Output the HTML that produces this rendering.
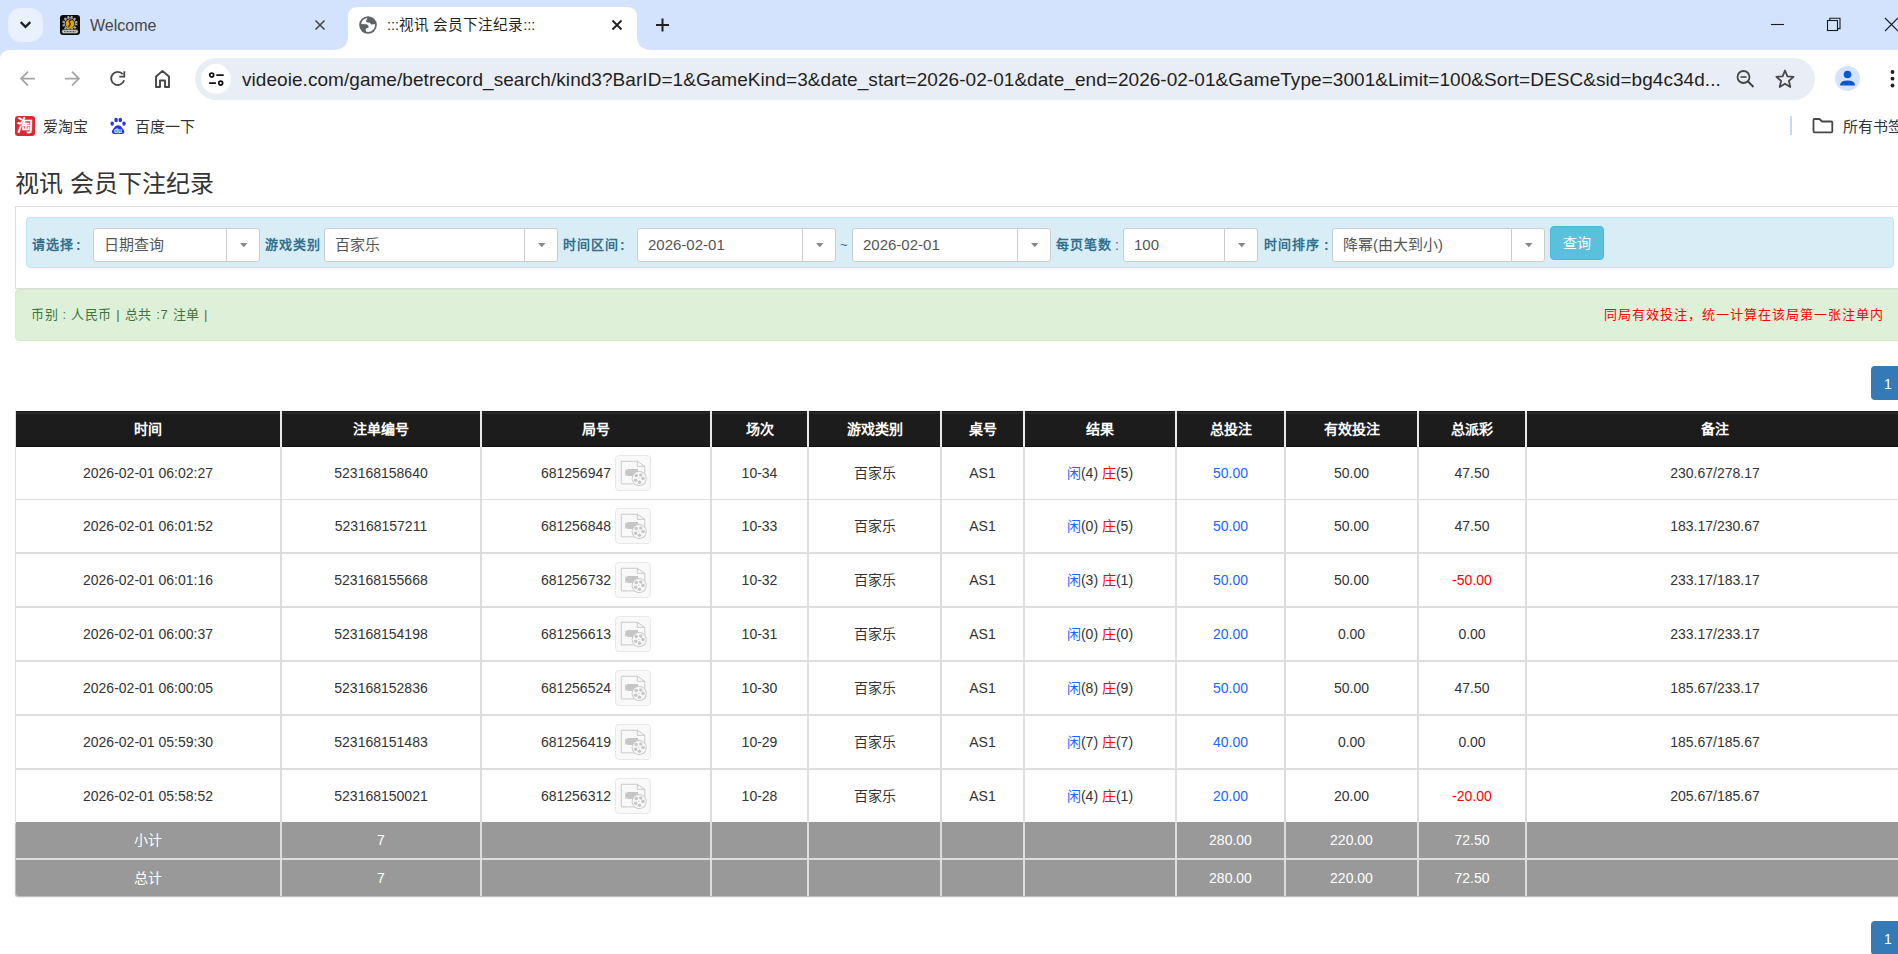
<!DOCTYPE html><html lang="zh-CN"><head><meta charset="utf-8"><title>视讯 会员下注纪录</title><style>

*{box-sizing:border-box}
html,body{margin:0;padding:0}
body{width:1898px;height:954px;overflow:hidden;position:relative;background:#fff;font-family:"Liberation Sans",sans-serif;color:#333}
.abs{position:absolute}
.t{position:absolute;white-space:nowrap;line-height:1}
svg{position:absolute;overflow:visible}
.ic{display:inline-block;vertical-align:middle;width:35px;height:35px;margin-left:4px;border:1px solid #eee;border-radius:4px;background:#f8f8f8;position:relative;top:-1px}

</style></head><body>
<div class="abs" style="left:0;top:0;width:1898px;height:62px;background:#d3e3fd"></div>
<div class="abs" style="left:8px;top:8px;width:35px;height:34px;border-radius:13px;background:#eaf1fe"></div>
<svg style="left:0;top:0" width="50" height="50"><path d="M20.7 22.1 L25.5 26.9 L30.3 22.1" fill="none" stroke="#1f1f1f" stroke-width="2.2"/></svg>
<div class="abs" style="left:60px;top:15px;width:20px;height:20px;border-radius:3px;background:#0a0a0a"></div>
<svg style="left:60px;top:15px" width="20" height="20"><circle cx="9.9" cy="8.4" r="6.3" fill="none" stroke="#a8a8a8" stroke-width="2.6" stroke-dasharray="1.9 1.4"/><circle cx="9.9" cy="8.4" r="5.6" fill="none" stroke="#9a9a9a" stroke-width="1"/><circle cx="9.9" cy="8.6" r="4.3" fill="#e0a41a"/><path d="M11.5 5.2 Q8.4 5.4 9.6 7.6 Q11.2 9.6 8.4 11.6" fill="none" stroke="#1a1a1a" stroke-width="1.3"/><circle cx="7.9" cy="13.3" r="1" fill="#e0a41a"/><circle cx="12" cy="13.3" r="1" fill="#e0a41a"/><rect x="1.8" y="14.6" width="16.4" height="3.9" rx="1.8" fill="#c8c8c8" stroke="#333" stroke-width="0.6"/><path d="M4 16.6 L16 16.6" stroke="#555" stroke-width="1.2" stroke-dasharray="1 0.5"/></svg>
<div class="t" style="left:90px;top:18px;font-size:16px;color:#474747">Welcome</div>
<svg style="left:0;top:0" width="340" height="50"><path d="M315.5 20.5 L324.5 29.5 M324.5 20.5 L315.5 29.5" stroke="#474747" stroke-width="1.6"/></svg>
<svg style="left:332px;top:0" width="322" height="50"><path d="M0 50 Q16 50 16 36 L16 17 Q16 7 26 7 L295 7 Q305 7 305 17 L305 36 Q305 50 321 50 Z" fill="#fff"/></svg>
<svg style="left:359px;top:16px" width="18" height="18"><defs><clipPath id="gc"><circle cx="9" cy="9" r="7.8"/></clipPath></defs><circle cx="9" cy="9" r="8.8" fill="#5f6368"/><circle cx="9" cy="9" r="7.1" fill="#fff"/><g clip-path="url(#gc)" fill="#5f6368"><path d="M9.6 0 L7.6 3.6 Q6.9 5.2 7.4 6 Q8.6 6.6 10.9 6.8 Q11.4 8.2 12.2 8.4 Q14.5 8.6 18 7.6 L18 0 Z"/><path d="M0 8 L7.6 8.2 Q9.6 9 9.7 10.8 Q9.5 11.9 7.6 12.3 Q6.6 12.6 6.7 14 L7.8 18 L0 18 Z"/></g></svg>
<div class="t" style="left:387px;top:18px;font-size:14.6px;color:#1f1f1f">:::视讯 会员下注纪录:::</div>
<svg style="left:0;top:0" width="700" height="50"><path d="M612.5 20.5 L621.5 29.5 M621.5 20.5 L612.5 29.5" stroke="#1f1f1f" stroke-width="1.8"/><path d="M656 25 L669 25 M662.5 18.5 L662.5 31.5" stroke="#1f1f1f" stroke-width="2"/></svg>
<svg style="left:1700px;top:0" width="198" height="50"><path d="M71 24.5 L84 24.5" stroke="#1a1a1a" stroke-width="1.1"/><rect x="127.5" y="20.5" width="10" height="10" fill="none" stroke="#1a1a1a" stroke-width="1.1"/><path d="M129.8 20.5 L129.8 18.3 L140 18.3 L140 28.6 L137.5 28.6" fill="none" stroke="#1a1a1a" stroke-width="1.1"/><path d="M185 18 L198 31 M198 18 L185 31" stroke="#1a1a1a" stroke-width="1.1"/></svg>
<div class="abs" style="left:0;top:50px;width:1898px;height:58px;background:#fff;border-top-left-radius:9px"></div>
<svg style="left:0;top:50px" width="195" height="58"><path d="M35 28.6 L21.2 28.6 M28 21.6 L21.1 28.6 L28 35.6" fill="none" stroke="#a6a6a6" stroke-width="1.8"/><path d="M65 28.6 L78.8 28.6 M72 21.6 L78.9 28.6 L72 35.6" fill="none" stroke="#a6a6a6" stroke-width="1.8"/><path d="M124.1 30.3 A6.6 6.6 0 1 1 122.8 24.2" fill="none" stroke="#474747" stroke-width="1.8"/><path d="M119.3 26.7 L124.3 26.7 L124.3 21.2" fill="none" stroke="#474747" stroke-width="1.8"/><path d="M156 37 L156 26.5 L162.5 21 L169 26.5 L169 37 L165 37 L165 30.5 L160 30.5 L160 37 Z" fill="none" stroke="#474747" stroke-width="1.9" stroke-linejoin="round"/></svg>
<div class="abs" style="left:195px;top:58px;width:1620px;height:42px;border-radius:21px;background:#e9eef6"></div>
<div class="abs" style="left:201px;top:64px;width:30px;height:30px;border-radius:15px;background:#fff"></div>
<svg style="left:201px;top:64px" width="30" height="30"><circle cx="10.7" cy="11.1" r="1.95" fill="none" stroke="#111" stroke-width="1.7"/><path d="M15.3 11.1 L22.7 11.1 M8.1 19.1 L14.9 19.1" stroke="#111" stroke-width="1.7"/><circle cx="19.7" cy="19.1" r="1.95" fill="none" stroke="#111" stroke-width="1.7"/></svg>
<div class="t" style="left:242px;top:70px;font-size:19px;letter-spacing:0.05px;color:#1f1f1f">videoie.com/game/betrecord_search/kind3?BarID=1&amp;GameKind=3&amp;date_start=2026-02-01&amp;date_end=2026-02-01&amp;GameType=3001&amp;Limit=100&amp;Sort=DESC&amp;sid=bg4c34d...</div>
<svg style="left:1700px;top:50px" width="198" height="58"><circle cx="43.5" cy="27" r="6" fill="none" stroke="#474747" stroke-width="1.8"/><path d="M40.5 27 L46.5 27" stroke="#474747" stroke-width="1.6"/><path d="M47.8 31.3 L53.5 37" stroke="#474747" stroke-width="2"/><path d="M85 20.5 L87.4 26.3 L93.6 26.8 L88.9 30.9 L90.3 37 L85 33.7 L79.7 37 L81.1 30.9 L76.4 26.8 L82.6 26.3 Z" fill="none" stroke="#474747" stroke-width="1.8" stroke-linejoin="round"/><circle cx="147.5" cy="28.5" r="12.5" fill="#d3e3fd"/><circle cx="147.5" cy="24.5" r="3.8" fill="#0b57d0"/><path d="M140 35.5 Q140 30.5 147.5 30.5 Q155 30.5 155 35.5 Z" fill="#0b57d0"/><circle cx="192.5" cy="22" r="1.9" fill="#1f1f1f"/><circle cx="192.5" cy="28.7" r="1.9" fill="#1f1f1f"/><circle cx="192.5" cy="35.5" r="1.9" fill="#1f1f1f"/></svg>
<div class="abs" style="left:15px;top:116px;width:20px;height:20px;border-radius:3px;background:#e0262f"></div>
<div class="t" style="left:17px;top:118px;font-size:16px;color:#fff;font-weight:bold">淘</div>
<div class="t" style="left:43px;top:119px;font-size:15px;color:#333">爱淘宝</div>
<svg style="left:108px;top:116px" width="20" height="20"><ellipse cx="4.2" cy="7.6" rx="1.7" ry="2.2" fill="#2932e1"/><ellipse cx="8.1" cy="4" rx="1.8" ry="2.3" fill="#2932e1"/><ellipse cx="12.3" cy="4" rx="1.8" ry="2.3" fill="#2932e1"/><ellipse cx="16" cy="7.6" rx="1.7" ry="2.2" fill="#2932e1"/><path d="M10.1 9.2 Q12.8 9.2 14.6 12.6 Q17.5 16 15.6 17.6 Q14.6 18.3 12 17.9 Q10.1 17.6 8.2 17.9 Q5.6 18.3 4.6 17.6 Q2.7 16 5.6 12.6 Q7.4 9.2 10.1 9.2 Z" fill="#2932e1"/><text x="10.1" y="16.8" font-size="6.5" fill="#fff" text-anchor="middle" font-family="Liberation Sans" font-weight="bold">du</text></svg>
<div class="t" style="left:135px;top:119px;font-size:15px;color:#333">百度一下</div>
<div class="abs" style="left:1790px;top:116px;width:2px;height:19px;background:#c6d9f7"></div>
<svg style="left:1810px;top:115px" width="26" height="22"><path d="M4.5 4 L9.5 4 L12 6.5 L21.3 6.5 Q22.3 6.5 22.3 7.5 L22.3 16.5 Q22.3 17.3 21.3 17.3 L4.5 17.3 Q3.5 17.3 3.5 16.3 L3.5 5 Q3.5 4 4.5 4 Z" fill="none" stroke="#474747" stroke-width="1.8" stroke-linejoin="round"/></svg>
<div class="t" style="left:1843px;top:119px;font-size:15px;color:#333">所有书签</div>
<div class="t" style="left:15px;top:172px;font-size:24px;color:#333">视讯 会员下注纪录</div>
<div class="abs" style="left:15px;top:206px;width:1950px;height:83px;border:1px solid #ddd;border-right:none"></div>
<div class="abs" style="left:26px;top:217px;width:1868px;height:51px;border:1px solid #bce8f1;border-radius:4px;background:#d9edf7"></div>
<div class="t" style="left:32px;top:238px;font-size:13px;letter-spacing:1px;font-weight:bold;color:#31708f">请选择</div>
<div class="t" style="left:76px;top:238px;font-size:14px;font-weight:bold;color:#31708f">:</div>
<div class="t" style="left:265px;top:238px;font-size:13px;letter-spacing:1px;font-weight:bold;color:#31708f">游戏类别</div>
<div class="t" style="left:563px;top:238px;font-size:13px;letter-spacing:1px;font-weight:bold;color:#31708f">时间区间</div>
<div class="t" style="left:620px;top:238px;font-size:14px;font-weight:bold;color:#31708f">:</div>
<div class="t" style="left:1056px;top:238px;font-size:13px;letter-spacing:1px;font-weight:bold;color:#31708f">每页笔数</div>
<div class="t" style="left:1115px;top:238px;font-size:14px;font-weight:normal;color:#31708f">:</div>
<div class="t" style="left:1264px;top:238px;font-size:13px;letter-spacing:1px;font-weight:bold;color:#31708f">时间排序</div>
<div class="t" style="left:1324px;top:238px;font-size:14px;font-weight:bold;color:#31708f">:</div>
<div class="t" style="left:840px;top:238px;font-size:13px;color:#31708f">~</div>
<div class="abs" style="left:93px;top:228px;width:167px;height:34px;border:1px solid #ccc;border-radius:3px;background:#fff"></div>
<div class="abs" style="left:226px;top:229px;width:1px;height:32px;background:#ccc"></div>
<svg style="left:240px;top:243px" width="8" height="5"><path d="M0 0 L7.5 0 L3.75 4.2 Z" fill="#888"/></svg>
<div class="t" style="left:104px;top:237px;font-size:15px;color:#555">日期查询</div>
<div class="abs" style="left:324px;top:228px;width:234px;height:34px;border:1px solid #ccc;border-radius:3px;background:#fff"></div>
<div class="abs" style="left:524px;top:229px;width:1px;height:32px;background:#ccc"></div>
<svg style="left:538px;top:243px" width="8" height="5"><path d="M0 0 L7.5 0 L3.75 4.2 Z" fill="#888"/></svg>
<div class="t" style="left:335px;top:237px;font-size:15px;color:#555">百家乐</div>
<div class="abs" style="left:637px;top:228px;width:199px;height:34px;border:1px solid #ccc;border-radius:3px;background:#fff"></div>
<div class="abs" style="left:802px;top:229px;width:1px;height:32px;background:#ccc"></div>
<svg style="left:816px;top:243px" width="8" height="5"><path d="M0 0 L7.5 0 L3.75 4.2 Z" fill="#888"/></svg>
<div class="t" style="left:648px;top:237px;font-size:15px;color:#555">2026-02-01</div>
<div class="abs" style="left:852px;top:228px;width:199px;height:34px;border:1px solid #ccc;border-radius:3px;background:#fff"></div>
<div class="abs" style="left:1017px;top:229px;width:1px;height:32px;background:#ccc"></div>
<svg style="left:1031px;top:243px" width="8" height="5"><path d="M0 0 L7.5 0 L3.75 4.2 Z" fill="#888"/></svg>
<div class="t" style="left:863px;top:237px;font-size:15px;color:#555">2026-02-01</div>
<div class="abs" style="left:1123px;top:228px;width:135px;height:34px;border:1px solid #ccc;border-radius:3px;background:#fff"></div>
<div class="abs" style="left:1224px;top:229px;width:1px;height:32px;background:#ccc"></div>
<svg style="left:1238px;top:243px" width="8" height="5"><path d="M0 0 L7.5 0 L3.75 4.2 Z" fill="#888"/></svg>
<div class="t" style="left:1134px;top:237px;font-size:15px;color:#555">100</div>
<div class="abs" style="left:1332px;top:228px;width:213px;height:34px;border:1px solid #ccc;border-radius:3px;background:#fff"></div>
<div class="abs" style="left:1511px;top:229px;width:1px;height:32px;background:#ccc"></div>
<svg style="left:1525px;top:243px" width="8" height="5"><path d="M0 0 L7.5 0 L3.75 4.2 Z" fill="#888"/></svg>
<div class="t" style="left:1343px;top:237px;font-size:15px;color:#555">降幂(由大到小)</div>
<div class="abs" style="left:1550px;top:226px;width:54px;height:34px;border:1px solid #46b8da;border-radius:4px;background:#5bc0de"></div>
<div class="t" style="left:1563px;top:236px;font-size:14px;color:#fff">查询</div>
<div class="abs" style="left:15px;top:289px;width:1950px;height:52px;border:1px solid #d6e9c6;border-radius:4px;background:#dff0d8"></div>
<div class="t" style="left:31px;top:308px;font-size:13px;letter-spacing:0.65px;color:#3c763d">币别 : 人民币 | 总共 :7 注单 |</div>
<div class="t" style="left:1604px;top:308px;font-size:13px;letter-spacing:1px;color:#f00">同局有效投注，统一计算在该局第一张注单内</div>
<div class="abs" style="left:1871px;top:366px;width:40px;height:34px;border-radius:4px;background:#337ab7"></div>
<div class="t" style="left:1884px;top:377px;font-size:14px;color:#fff">1</div>
<div class="abs" style="left:1871px;top:921px;width:40px;height:34px;border-radius:4px;background:#337ab7"></div>
<div class="t" style="left:1884px;top:932px;font-size:14px;color:#fff">1</div>
<div class="abs" style="left:15px;top:411px;width:1px;height:411px;background:#ddd"></div>
<div class="abs" style="left:16px;top:411px;width:1950px;height:36px;background:#1c1c1c;border-top:1px solid #171717;border-bottom:1px solid #0f0f0f"></div>
<div class="abs" style="left:16px;top:412px;width:1950px;height:2px;background:#282828"></div>
<div class="abs" style="left:16px;top:499px;width:1950px;height:1px;background:#ddd"></div>
<div class="abs" style="left:16px;top:552px;width:1950px;height:2px;background:#ddd"></div>
<div class="abs" style="left:16px;top:606px;width:1950px;height:2px;background:#ddd"></div>
<div class="abs" style="left:16px;top:660px;width:1950px;height:2px;background:#ddd"></div>
<div class="abs" style="left:16px;top:714px;width:1950px;height:2px;background:#ddd"></div>
<div class="abs" style="left:16px;top:768px;width:1950px;height:2px;background:#ddd"></div>
<div class="abs" style="left:16px;top:822px;width:1950px;height:0px;background:#ddd"></div>
<div class="abs" style="left:16px;top:822px;width:1950px;height:74px;background:#999;border-bottom-left-radius:3px;box-shadow:-0.5px 1px 1.5px rgba(0,0,0,.3)"></div>
<div class="abs" style="left:16px;top:858px;width:1950px;height:2px;background:#ddd"></div>
<div class="abs" style="left:280px;top:411px;width:2px;height:36px;background:#e8e8e8"></div>
<div class="abs" style="left:280px;top:447px;width:2px;height:449px;background:#ddd"></div>
<div class="abs" style="left:480px;top:411px;width:2px;height:36px;background:#e8e8e8"></div>
<div class="abs" style="left:480px;top:447px;width:2px;height:449px;background:#ddd"></div>
<div class="abs" style="left:710px;top:411px;width:2px;height:36px;background:#e8e8e8"></div>
<div class="abs" style="left:710px;top:447px;width:2px;height:449px;background:#ddd"></div>
<div class="abs" style="left:807px;top:411px;width:2px;height:36px;background:#e8e8e8"></div>
<div class="abs" style="left:807px;top:447px;width:2px;height:449px;background:#ddd"></div>
<div class="abs" style="left:940px;top:411px;width:2px;height:36px;background:#e8e8e8"></div>
<div class="abs" style="left:940px;top:447px;width:2px;height:449px;background:#ddd"></div>
<div class="abs" style="left:1023px;top:411px;width:2px;height:36px;background:#e8e8e8"></div>
<div class="abs" style="left:1023px;top:447px;width:2px;height:449px;background:#ddd"></div>
<div class="abs" style="left:1175px;top:411px;width:2px;height:36px;background:#e8e8e8"></div>
<div class="abs" style="left:1175px;top:447px;width:2px;height:449px;background:#ddd"></div>
<div class="abs" style="left:1284px;top:411px;width:2px;height:36px;background:#e8e8e8"></div>
<div class="abs" style="left:1284px;top:447px;width:2px;height:449px;background:#ddd"></div>
<div class="abs" style="left:1417px;top:411px;width:2px;height:36px;background:#e8e8e8"></div>
<div class="abs" style="left:1417px;top:447px;width:2px;height:449px;background:#ddd"></div>
<div class="abs" style="left:1525px;top:411px;width:2px;height:36px;background:#e8e8e8"></div>
<div class="abs" style="left:1525px;top:447px;width:2px;height:449px;background:#ddd"></div>
<div class="abs" style="left:16px;top:419px;width:264px;height:20px;line-height:20px;text-align:center;white-space:nowrap;font-size:14px;font-weight:bold;color:#fff">时间</div>
<div class="abs" style="left:282px;top:419px;width:198px;height:20px;line-height:20px;text-align:center;white-space:nowrap;font-size:14px;font-weight:bold;color:#fff">注单编号</div>
<div class="abs" style="left:482px;top:419px;width:228px;height:20px;line-height:20px;text-align:center;white-space:nowrap;font-size:14px;font-weight:bold;color:#fff">局号</div>
<div class="abs" style="left:712px;top:419px;width:95px;height:20px;line-height:20px;text-align:center;white-space:nowrap;font-size:14px;font-weight:bold;color:#fff">场次</div>
<div class="abs" style="left:809px;top:419px;width:131px;height:20px;line-height:20px;text-align:center;white-space:nowrap;font-size:14px;font-weight:bold;color:#fff">游戏类别</div>
<div class="abs" style="left:942px;top:419px;width:81px;height:20px;line-height:20px;text-align:center;white-space:nowrap;font-size:14px;font-weight:bold;color:#fff">桌号</div>
<div class="abs" style="left:1025px;top:419px;width:150px;height:20px;line-height:20px;text-align:center;white-space:nowrap;font-size:14px;font-weight:bold;color:#fff">结果</div>
<div class="abs" style="left:1177px;top:419px;width:107px;height:20px;line-height:20px;text-align:center;white-space:nowrap;font-size:14px;font-weight:bold;color:#fff">总投注</div>
<div class="abs" style="left:1286px;top:419px;width:131px;height:20px;line-height:20px;text-align:center;white-space:nowrap;font-size:14px;font-weight:bold;color:#fff">有效投注</div>
<div class="abs" style="left:1419px;top:419px;width:106px;height:20px;line-height:20px;text-align:center;white-space:nowrap;font-size:14px;font-weight:bold;color:#fff">总派彩</div>
<div class="abs" style="left:1527px;top:419px;width:376px;height:20px;line-height:20px;text-align:center;white-space:nowrap;font-size:14px;font-weight:bold;color:#fff">备注</div>
<div class="abs" style="left:16px;top:463px;width:264px;height:20px;line-height:20px;text-align:center;white-space:nowrap;font-size:14px;color:#333">2026-02-01 06:02:27</div>
<div class="abs" style="left:282px;top:463px;width:198px;height:20px;line-height:20px;text-align:center;white-space:nowrap;font-size:14px;color:#333">523168158640</div>
<div class="abs" style="left:482px;top:463px;width:129px;height:20px;line-height:20px;text-align:right;white-space:nowrap;font-size:14px;color:#333">681256947</div>
<div class="abs" style="left:615px;top:455px;width:36px;height:36px;border:1px solid #e9e9e9;border-radius:4px;background:#f9f9f9"></div>
<svg style="left:612px;top:452px" width="42" height="42"><path d="M9.25 9.25 L25.3 9.25 L32.8 14.3 L32.8 31.9 L9.25 31.9 Z" fill="none" stroke="#c9c9c9" stroke-width="1"/><path d="M25.3 9.25 L25.3 14.3 L32.8 14.3" fill="none" stroke="#c9c9c9" stroke-width="1"/><path d="M13.2 17.2 L15.2 18.4 L15.2 17 L26 17 L26 24 L15.2 24 L15.2 22.6 L13.2 24 Z" fill="#c6c6c6"/><circle cx="27.2" cy="26.5" r="7.1" fill="#f9f9f9" stroke="#c9c9c9" stroke-width="1"/><circle cx="24.2" cy="23.6" r="1.75" fill="#c6c6c6"/><circle cx="28.8" cy="22.9" r="1.75" fill="#c6c6c6"/><circle cx="31" cy="26.6" r="1.75" fill="#c6c6c6"/><circle cx="27.5" cy="30.2" r="1.75" fill="#c6c6c6"/><circle cx="23.6" cy="28.2" r="1.75" fill="#c6c6c6"/><circle cx="26.9" cy="26.4" r="0.6" fill="#c6c6c6"/></svg>
<div class="abs" style="left:712px;top:463px;width:95px;height:20px;line-height:20px;text-align:center;white-space:nowrap;font-size:14px;color:#333">10-34</div>
<div class="abs" style="left:809px;top:463px;width:131px;height:20px;line-height:20px;text-align:center;white-space:nowrap;font-size:14px;color:#333">百家乐</div>
<div class="abs" style="left:942px;top:463px;width:81px;height:20px;line-height:20px;text-align:center;white-space:nowrap;font-size:14px;color:#333">AS1</div>
<div class="abs" style="left:1025px;top:463px;width:150px;height:20px;line-height:20px;text-align:center;white-space:nowrap;font-size:14px;color:#333"><span style="color:#1a66ff">闲</span>(4) <span style="color:#f00">庄</span>(5)</div>
<div class="abs" style="left:1177px;top:463px;width:107px;height:20px;line-height:20px;text-align:center;white-space:nowrap;font-size:14px;color:#1a66ff">50.00</div>
<div class="abs" style="left:1286px;top:463px;width:131px;height:20px;line-height:20px;text-align:center;white-space:nowrap;font-size:14px;color:#333">50.00</div>
<div class="abs" style="left:1419px;top:463px;width:106px;height:20px;line-height:20px;text-align:center;white-space:nowrap;font-size:14px;color:#333">47.50</div>
<div class="abs" style="left:1527px;top:463px;width:376px;height:20px;line-height:20px;text-align:center;white-space:nowrap;font-size:14px;color:#333">230.67/278.17</div>
<div class="abs" style="left:16px;top:516px;width:264px;height:20px;line-height:20px;text-align:center;white-space:nowrap;font-size:14px;color:#333">2026-02-01 06:01:52</div>
<div class="abs" style="left:282px;top:516px;width:198px;height:20px;line-height:20px;text-align:center;white-space:nowrap;font-size:14px;color:#333">523168157211</div>
<div class="abs" style="left:482px;top:516px;width:129px;height:20px;line-height:20px;text-align:right;white-space:nowrap;font-size:14px;color:#333">681256848</div>
<div class="abs" style="left:615px;top:508px;width:36px;height:36px;border:1px solid #e9e9e9;border-radius:4px;background:#f9f9f9"></div>
<svg style="left:612px;top:505px" width="42" height="42"><path d="M9.25 9.25 L25.3 9.25 L32.8 14.3 L32.8 31.9 L9.25 31.9 Z" fill="none" stroke="#c9c9c9" stroke-width="1"/><path d="M25.3 9.25 L25.3 14.3 L32.8 14.3" fill="none" stroke="#c9c9c9" stroke-width="1"/><path d="M13.2 17.2 L15.2 18.4 L15.2 17 L26 17 L26 24 L15.2 24 L15.2 22.6 L13.2 24 Z" fill="#c6c6c6"/><circle cx="27.2" cy="26.5" r="7.1" fill="#f9f9f9" stroke="#c9c9c9" stroke-width="1"/><circle cx="24.2" cy="23.6" r="1.75" fill="#c6c6c6"/><circle cx="28.8" cy="22.9" r="1.75" fill="#c6c6c6"/><circle cx="31" cy="26.6" r="1.75" fill="#c6c6c6"/><circle cx="27.5" cy="30.2" r="1.75" fill="#c6c6c6"/><circle cx="23.6" cy="28.2" r="1.75" fill="#c6c6c6"/><circle cx="26.9" cy="26.4" r="0.6" fill="#c6c6c6"/></svg>
<div class="abs" style="left:712px;top:516px;width:95px;height:20px;line-height:20px;text-align:center;white-space:nowrap;font-size:14px;color:#333">10-33</div>
<div class="abs" style="left:809px;top:516px;width:131px;height:20px;line-height:20px;text-align:center;white-space:nowrap;font-size:14px;color:#333">百家乐</div>
<div class="abs" style="left:942px;top:516px;width:81px;height:20px;line-height:20px;text-align:center;white-space:nowrap;font-size:14px;color:#333">AS1</div>
<div class="abs" style="left:1025px;top:516px;width:150px;height:20px;line-height:20px;text-align:center;white-space:nowrap;font-size:14px;color:#333"><span style="color:#1a66ff">闲</span>(0) <span style="color:#f00">庄</span>(5)</div>
<div class="abs" style="left:1177px;top:516px;width:107px;height:20px;line-height:20px;text-align:center;white-space:nowrap;font-size:14px;color:#1a66ff">50.00</div>
<div class="abs" style="left:1286px;top:516px;width:131px;height:20px;line-height:20px;text-align:center;white-space:nowrap;font-size:14px;color:#333">50.00</div>
<div class="abs" style="left:1419px;top:516px;width:106px;height:20px;line-height:20px;text-align:center;white-space:nowrap;font-size:14px;color:#333">47.50</div>
<div class="abs" style="left:1527px;top:516px;width:376px;height:20px;line-height:20px;text-align:center;white-space:nowrap;font-size:14px;color:#333">183.17/230.67</div>
<div class="abs" style="left:16px;top:570px;width:264px;height:20px;line-height:20px;text-align:center;white-space:nowrap;font-size:14px;color:#333">2026-02-01 06:01:16</div>
<div class="abs" style="left:282px;top:570px;width:198px;height:20px;line-height:20px;text-align:center;white-space:nowrap;font-size:14px;color:#333">523168155668</div>
<div class="abs" style="left:482px;top:570px;width:129px;height:20px;line-height:20px;text-align:right;white-space:nowrap;font-size:14px;color:#333">681256732</div>
<div class="abs" style="left:615px;top:562px;width:36px;height:36px;border:1px solid #e9e9e9;border-radius:4px;background:#f9f9f9"></div>
<svg style="left:612px;top:559px" width="42" height="42"><path d="M9.25 9.25 L25.3 9.25 L32.8 14.3 L32.8 31.9 L9.25 31.9 Z" fill="none" stroke="#c9c9c9" stroke-width="1"/><path d="M25.3 9.25 L25.3 14.3 L32.8 14.3" fill="none" stroke="#c9c9c9" stroke-width="1"/><path d="M13.2 17.2 L15.2 18.4 L15.2 17 L26 17 L26 24 L15.2 24 L15.2 22.6 L13.2 24 Z" fill="#c6c6c6"/><circle cx="27.2" cy="26.5" r="7.1" fill="#f9f9f9" stroke="#c9c9c9" stroke-width="1"/><circle cx="24.2" cy="23.6" r="1.75" fill="#c6c6c6"/><circle cx="28.8" cy="22.9" r="1.75" fill="#c6c6c6"/><circle cx="31" cy="26.6" r="1.75" fill="#c6c6c6"/><circle cx="27.5" cy="30.2" r="1.75" fill="#c6c6c6"/><circle cx="23.6" cy="28.2" r="1.75" fill="#c6c6c6"/><circle cx="26.9" cy="26.4" r="0.6" fill="#c6c6c6"/></svg>
<div class="abs" style="left:712px;top:570px;width:95px;height:20px;line-height:20px;text-align:center;white-space:nowrap;font-size:14px;color:#333">10-32</div>
<div class="abs" style="left:809px;top:570px;width:131px;height:20px;line-height:20px;text-align:center;white-space:nowrap;font-size:14px;color:#333">百家乐</div>
<div class="abs" style="left:942px;top:570px;width:81px;height:20px;line-height:20px;text-align:center;white-space:nowrap;font-size:14px;color:#333">AS1</div>
<div class="abs" style="left:1025px;top:570px;width:150px;height:20px;line-height:20px;text-align:center;white-space:nowrap;font-size:14px;color:#333"><span style="color:#1a66ff">闲</span>(3) <span style="color:#f00">庄</span>(1)</div>
<div class="abs" style="left:1177px;top:570px;width:107px;height:20px;line-height:20px;text-align:center;white-space:nowrap;font-size:14px;color:#1a66ff">50.00</div>
<div class="abs" style="left:1286px;top:570px;width:131px;height:20px;line-height:20px;text-align:center;white-space:nowrap;font-size:14px;color:#333">50.00</div>
<div class="abs" style="left:1419px;top:570px;width:106px;height:20px;line-height:20px;text-align:center;white-space:nowrap;font-size:14px;color:#f00">-50.00</div>
<div class="abs" style="left:1527px;top:570px;width:376px;height:20px;line-height:20px;text-align:center;white-space:nowrap;font-size:14px;color:#333">233.17/183.17</div>
<div class="abs" style="left:16px;top:624px;width:264px;height:20px;line-height:20px;text-align:center;white-space:nowrap;font-size:14px;color:#333">2026-02-01 06:00:37</div>
<div class="abs" style="left:282px;top:624px;width:198px;height:20px;line-height:20px;text-align:center;white-space:nowrap;font-size:14px;color:#333">523168154198</div>
<div class="abs" style="left:482px;top:624px;width:129px;height:20px;line-height:20px;text-align:right;white-space:nowrap;font-size:14px;color:#333">681256613</div>
<div class="abs" style="left:615px;top:616px;width:36px;height:36px;border:1px solid #e9e9e9;border-radius:4px;background:#f9f9f9"></div>
<svg style="left:612px;top:613px" width="42" height="42"><path d="M9.25 9.25 L25.3 9.25 L32.8 14.3 L32.8 31.9 L9.25 31.9 Z" fill="none" stroke="#c9c9c9" stroke-width="1"/><path d="M25.3 9.25 L25.3 14.3 L32.8 14.3" fill="none" stroke="#c9c9c9" stroke-width="1"/><path d="M13.2 17.2 L15.2 18.4 L15.2 17 L26 17 L26 24 L15.2 24 L15.2 22.6 L13.2 24 Z" fill="#c6c6c6"/><circle cx="27.2" cy="26.5" r="7.1" fill="#f9f9f9" stroke="#c9c9c9" stroke-width="1"/><circle cx="24.2" cy="23.6" r="1.75" fill="#c6c6c6"/><circle cx="28.8" cy="22.9" r="1.75" fill="#c6c6c6"/><circle cx="31" cy="26.6" r="1.75" fill="#c6c6c6"/><circle cx="27.5" cy="30.2" r="1.75" fill="#c6c6c6"/><circle cx="23.6" cy="28.2" r="1.75" fill="#c6c6c6"/><circle cx="26.9" cy="26.4" r="0.6" fill="#c6c6c6"/></svg>
<div class="abs" style="left:712px;top:624px;width:95px;height:20px;line-height:20px;text-align:center;white-space:nowrap;font-size:14px;color:#333">10-31</div>
<div class="abs" style="left:809px;top:624px;width:131px;height:20px;line-height:20px;text-align:center;white-space:nowrap;font-size:14px;color:#333">百家乐</div>
<div class="abs" style="left:942px;top:624px;width:81px;height:20px;line-height:20px;text-align:center;white-space:nowrap;font-size:14px;color:#333">AS1</div>
<div class="abs" style="left:1025px;top:624px;width:150px;height:20px;line-height:20px;text-align:center;white-space:nowrap;font-size:14px;color:#333"><span style="color:#1a66ff">闲</span>(0) <span style="color:#f00">庄</span>(0)</div>
<div class="abs" style="left:1177px;top:624px;width:107px;height:20px;line-height:20px;text-align:center;white-space:nowrap;font-size:14px;color:#1a66ff">20.00</div>
<div class="abs" style="left:1286px;top:624px;width:131px;height:20px;line-height:20px;text-align:center;white-space:nowrap;font-size:14px;color:#333">0.00</div>
<div class="abs" style="left:1419px;top:624px;width:106px;height:20px;line-height:20px;text-align:center;white-space:nowrap;font-size:14px;color:#333">0.00</div>
<div class="abs" style="left:1527px;top:624px;width:376px;height:20px;line-height:20px;text-align:center;white-space:nowrap;font-size:14px;color:#333">233.17/233.17</div>
<div class="abs" style="left:16px;top:678px;width:264px;height:20px;line-height:20px;text-align:center;white-space:nowrap;font-size:14px;color:#333">2026-02-01 06:00:05</div>
<div class="abs" style="left:282px;top:678px;width:198px;height:20px;line-height:20px;text-align:center;white-space:nowrap;font-size:14px;color:#333">523168152836</div>
<div class="abs" style="left:482px;top:678px;width:129px;height:20px;line-height:20px;text-align:right;white-space:nowrap;font-size:14px;color:#333">681256524</div>
<div class="abs" style="left:615px;top:670px;width:36px;height:36px;border:1px solid #e9e9e9;border-radius:4px;background:#f9f9f9"></div>
<svg style="left:612px;top:667px" width="42" height="42"><path d="M9.25 9.25 L25.3 9.25 L32.8 14.3 L32.8 31.9 L9.25 31.9 Z" fill="none" stroke="#c9c9c9" stroke-width="1"/><path d="M25.3 9.25 L25.3 14.3 L32.8 14.3" fill="none" stroke="#c9c9c9" stroke-width="1"/><path d="M13.2 17.2 L15.2 18.4 L15.2 17 L26 17 L26 24 L15.2 24 L15.2 22.6 L13.2 24 Z" fill="#c6c6c6"/><circle cx="27.2" cy="26.5" r="7.1" fill="#f9f9f9" stroke="#c9c9c9" stroke-width="1"/><circle cx="24.2" cy="23.6" r="1.75" fill="#c6c6c6"/><circle cx="28.8" cy="22.9" r="1.75" fill="#c6c6c6"/><circle cx="31" cy="26.6" r="1.75" fill="#c6c6c6"/><circle cx="27.5" cy="30.2" r="1.75" fill="#c6c6c6"/><circle cx="23.6" cy="28.2" r="1.75" fill="#c6c6c6"/><circle cx="26.9" cy="26.4" r="0.6" fill="#c6c6c6"/></svg>
<div class="abs" style="left:712px;top:678px;width:95px;height:20px;line-height:20px;text-align:center;white-space:nowrap;font-size:14px;color:#333">10-30</div>
<div class="abs" style="left:809px;top:678px;width:131px;height:20px;line-height:20px;text-align:center;white-space:nowrap;font-size:14px;color:#333">百家乐</div>
<div class="abs" style="left:942px;top:678px;width:81px;height:20px;line-height:20px;text-align:center;white-space:nowrap;font-size:14px;color:#333">AS1</div>
<div class="abs" style="left:1025px;top:678px;width:150px;height:20px;line-height:20px;text-align:center;white-space:nowrap;font-size:14px;color:#333"><span style="color:#1a66ff">闲</span>(8) <span style="color:#f00">庄</span>(9)</div>
<div class="abs" style="left:1177px;top:678px;width:107px;height:20px;line-height:20px;text-align:center;white-space:nowrap;font-size:14px;color:#1a66ff">50.00</div>
<div class="abs" style="left:1286px;top:678px;width:131px;height:20px;line-height:20px;text-align:center;white-space:nowrap;font-size:14px;color:#333">50.00</div>
<div class="abs" style="left:1419px;top:678px;width:106px;height:20px;line-height:20px;text-align:center;white-space:nowrap;font-size:14px;color:#333">47.50</div>
<div class="abs" style="left:1527px;top:678px;width:376px;height:20px;line-height:20px;text-align:center;white-space:nowrap;font-size:14px;color:#333">185.67/233.17</div>
<div class="abs" style="left:16px;top:732px;width:264px;height:20px;line-height:20px;text-align:center;white-space:nowrap;font-size:14px;color:#333">2026-02-01 05:59:30</div>
<div class="abs" style="left:282px;top:732px;width:198px;height:20px;line-height:20px;text-align:center;white-space:nowrap;font-size:14px;color:#333">523168151483</div>
<div class="abs" style="left:482px;top:732px;width:129px;height:20px;line-height:20px;text-align:right;white-space:nowrap;font-size:14px;color:#333">681256419</div>
<div class="abs" style="left:615px;top:724px;width:36px;height:36px;border:1px solid #e9e9e9;border-radius:4px;background:#f9f9f9"></div>
<svg style="left:612px;top:721px" width="42" height="42"><path d="M9.25 9.25 L25.3 9.25 L32.8 14.3 L32.8 31.9 L9.25 31.9 Z" fill="none" stroke="#c9c9c9" stroke-width="1"/><path d="M25.3 9.25 L25.3 14.3 L32.8 14.3" fill="none" stroke="#c9c9c9" stroke-width="1"/><path d="M13.2 17.2 L15.2 18.4 L15.2 17 L26 17 L26 24 L15.2 24 L15.2 22.6 L13.2 24 Z" fill="#c6c6c6"/><circle cx="27.2" cy="26.5" r="7.1" fill="#f9f9f9" stroke="#c9c9c9" stroke-width="1"/><circle cx="24.2" cy="23.6" r="1.75" fill="#c6c6c6"/><circle cx="28.8" cy="22.9" r="1.75" fill="#c6c6c6"/><circle cx="31" cy="26.6" r="1.75" fill="#c6c6c6"/><circle cx="27.5" cy="30.2" r="1.75" fill="#c6c6c6"/><circle cx="23.6" cy="28.2" r="1.75" fill="#c6c6c6"/><circle cx="26.9" cy="26.4" r="0.6" fill="#c6c6c6"/></svg>
<div class="abs" style="left:712px;top:732px;width:95px;height:20px;line-height:20px;text-align:center;white-space:nowrap;font-size:14px;color:#333">10-29</div>
<div class="abs" style="left:809px;top:732px;width:131px;height:20px;line-height:20px;text-align:center;white-space:nowrap;font-size:14px;color:#333">百家乐</div>
<div class="abs" style="left:942px;top:732px;width:81px;height:20px;line-height:20px;text-align:center;white-space:nowrap;font-size:14px;color:#333">AS1</div>
<div class="abs" style="left:1025px;top:732px;width:150px;height:20px;line-height:20px;text-align:center;white-space:nowrap;font-size:14px;color:#333"><span style="color:#1a66ff">闲</span>(7) <span style="color:#f00">庄</span>(7)</div>
<div class="abs" style="left:1177px;top:732px;width:107px;height:20px;line-height:20px;text-align:center;white-space:nowrap;font-size:14px;color:#1a66ff">40.00</div>
<div class="abs" style="left:1286px;top:732px;width:131px;height:20px;line-height:20px;text-align:center;white-space:nowrap;font-size:14px;color:#333">0.00</div>
<div class="abs" style="left:1419px;top:732px;width:106px;height:20px;line-height:20px;text-align:center;white-space:nowrap;font-size:14px;color:#333">0.00</div>
<div class="abs" style="left:1527px;top:732px;width:376px;height:20px;line-height:20px;text-align:center;white-space:nowrap;font-size:14px;color:#333">185.67/185.67</div>
<div class="abs" style="left:16px;top:786px;width:264px;height:20px;line-height:20px;text-align:center;white-space:nowrap;font-size:14px;color:#333">2026-02-01 05:58:52</div>
<div class="abs" style="left:282px;top:786px;width:198px;height:20px;line-height:20px;text-align:center;white-space:nowrap;font-size:14px;color:#333">523168150021</div>
<div class="abs" style="left:482px;top:786px;width:129px;height:20px;line-height:20px;text-align:right;white-space:nowrap;font-size:14px;color:#333">681256312</div>
<div class="abs" style="left:615px;top:778px;width:36px;height:36px;border:1px solid #e9e9e9;border-radius:4px;background:#f9f9f9"></div>
<svg style="left:612px;top:775px" width="42" height="42"><path d="M9.25 9.25 L25.3 9.25 L32.8 14.3 L32.8 31.9 L9.25 31.9 Z" fill="none" stroke="#c9c9c9" stroke-width="1"/><path d="M25.3 9.25 L25.3 14.3 L32.8 14.3" fill="none" stroke="#c9c9c9" stroke-width="1"/><path d="M13.2 17.2 L15.2 18.4 L15.2 17 L26 17 L26 24 L15.2 24 L15.2 22.6 L13.2 24 Z" fill="#c6c6c6"/><circle cx="27.2" cy="26.5" r="7.1" fill="#f9f9f9" stroke="#c9c9c9" stroke-width="1"/><circle cx="24.2" cy="23.6" r="1.75" fill="#c6c6c6"/><circle cx="28.8" cy="22.9" r="1.75" fill="#c6c6c6"/><circle cx="31" cy="26.6" r="1.75" fill="#c6c6c6"/><circle cx="27.5" cy="30.2" r="1.75" fill="#c6c6c6"/><circle cx="23.6" cy="28.2" r="1.75" fill="#c6c6c6"/><circle cx="26.9" cy="26.4" r="0.6" fill="#c6c6c6"/></svg>
<div class="abs" style="left:712px;top:786px;width:95px;height:20px;line-height:20px;text-align:center;white-space:nowrap;font-size:14px;color:#333">10-28</div>
<div class="abs" style="left:809px;top:786px;width:131px;height:20px;line-height:20px;text-align:center;white-space:nowrap;font-size:14px;color:#333">百家乐</div>
<div class="abs" style="left:942px;top:786px;width:81px;height:20px;line-height:20px;text-align:center;white-space:nowrap;font-size:14px;color:#333">AS1</div>
<div class="abs" style="left:1025px;top:786px;width:150px;height:20px;line-height:20px;text-align:center;white-space:nowrap;font-size:14px;color:#333"><span style="color:#1a66ff">闲</span>(4) <span style="color:#f00">庄</span>(1)</div>
<div class="abs" style="left:1177px;top:786px;width:107px;height:20px;line-height:20px;text-align:center;white-space:nowrap;font-size:14px;color:#1a66ff">20.00</div>
<div class="abs" style="left:1286px;top:786px;width:131px;height:20px;line-height:20px;text-align:center;white-space:nowrap;font-size:14px;color:#333">20.00</div>
<div class="abs" style="left:1419px;top:786px;width:106px;height:20px;line-height:20px;text-align:center;white-space:nowrap;font-size:14px;color:#f00">-20.00</div>
<div class="abs" style="left:1527px;top:786px;width:376px;height:20px;line-height:20px;text-align:center;white-space:nowrap;font-size:14px;color:#333">205.67/185.67</div>
<div class="abs" style="left:16px;top:830px;width:264px;height:20px;line-height:20px;text-align:center;white-space:nowrap;font-size:14px;color:#fff">小计</div>
<div class="abs" style="left:282px;top:830px;width:198px;height:20px;line-height:20px;text-align:center;white-space:nowrap;font-size:14px;color:#fff">7</div>
<div class="abs" style="left:1177px;top:830px;width:107px;height:20px;line-height:20px;text-align:center;white-space:nowrap;font-size:14px;color:#fff">280.00</div>
<div class="abs" style="left:1286px;top:830px;width:131px;height:20px;line-height:20px;text-align:center;white-space:nowrap;font-size:14px;color:#fff">220.00</div>
<div class="abs" style="left:1419px;top:830px;width:106px;height:20px;line-height:20px;text-align:center;white-space:nowrap;font-size:14px;color:#fff">72.50</div>
<div class="abs" style="left:16px;top:868px;width:264px;height:20px;line-height:20px;text-align:center;white-space:nowrap;font-size:14px;color:#fff">总计</div>
<div class="abs" style="left:282px;top:868px;width:198px;height:20px;line-height:20px;text-align:center;white-space:nowrap;font-size:14px;color:#fff">7</div>
<div class="abs" style="left:1177px;top:868px;width:107px;height:20px;line-height:20px;text-align:center;white-space:nowrap;font-size:14px;color:#fff">280.00</div>
<div class="abs" style="left:1286px;top:868px;width:131px;height:20px;line-height:20px;text-align:center;white-space:nowrap;font-size:14px;color:#fff">220.00</div>
<div class="abs" style="left:1419px;top:868px;width:106px;height:20px;line-height:20px;text-align:center;white-space:nowrap;font-size:14px;color:#fff">72.50</div>
<!--CONTENT-->
</body></html>
